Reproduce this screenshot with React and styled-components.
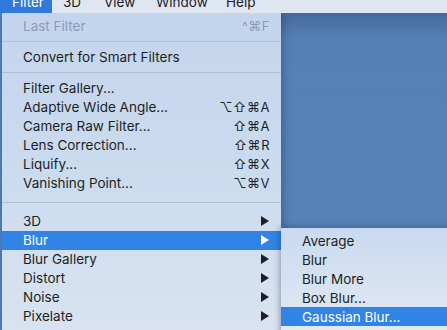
import React from "react";
import styled, { createGlobalStyle, css } from "styled-components";

const GlobalStyle = createGlobalStyle`
  html, body {
    margin: 0;
    padding: 0;
    background: #5580b6;
  }
  body {
    font-family: "Inter", "DejaVu Sans", sans-serif;
    -webkit-font-smoothing: antialiased;
  }
`;

const menuTitles = [
  { label: "Filter", width: 52, active: true },
  { label: "3D", width: 39 },
  { label: "View", width: 50 },
  { label: "Window", width: 68 },
  { label: "Help", width: 44 },
];

const mainItems = [
  { label: "Last Filter", shortcut: "^⌘F", disabled: true },
  { sep: true, top: 5, bottom: 6 },
  { label: "Convert for Smart Filters" },
  { sep: true, top: 5, bottom: 6 },
  { label: "Filter Gallery..." },
  { label: "Adaptive Wide Angle...", shortcut: "⌥⇧⌘A" },
  { label: "Camera Raw Filter...", shortcut: "⇧⌘A" },
  { label: "Lens Correction...", shortcut: "⇧⌘R" },
  { label: "Liquify...", shortcut: "⇧⌘X" },
  { label: "Vanishing Point...", shortcut: "⌥⌘V" },
  { sep: true, top: 9, bottom: 9 },
  { label: "3D", sub: true },
  { label: "Blur", sub: true, active: true },
  { label: "Blur Gallery", sub: true },
  { label: "Distort", sub: true },
  { label: "Noise", sub: true },
  { label: "Pixelate", sub: true },
  { label: "Render", sub: true },
];

const blurItems = [
  { label: "Average" },
  { label: "Blur" },
  { label: "Blur More" },
  { label: "Box Blur..." },
  { label: "Gaussian Blur...", active: true },
  { label: "Lens Blur..." },
];

class App extends React.Component {
  renderRow(item, i) {
    if (item.sep) {
      return (
        <Separator key={i} $top={item.top} $bottom={item.bottom}>
          <Line />
        </Separator>
      );
    }
    return (
      <Row key={i} $active={item.active} $disabled={item.disabled}>
        <Label>{item.label}</Label>
        {item.shortcut && <Shortcut>{item.shortcut}</Shortcut>}
        {item.sub && (
          <Arrow viewBox="0 0 8 10">
            <polygon points="0,0 8,5 0,10" fill="currentColor" />
          </Arrow>
        )}
      </Row>
    );
  }

  render() {
    return (
      <Screen>
        <GlobalStyle />
        <MenuBar>
          {menuTitles.map((t) => (
            <MenuTitle key={t.label} $w={t.width} $active={t.active}>
              {t.label}
            </MenuTitle>
          ))}
        </MenuBar>
        <Workspace>
          <Dropdown>{mainItems.map((item, i) => this.renderRow(item, i))}</Dropdown>
          <Desktop />
        </Workspace>
        <Submenu>{blurItems.map((item, i) => this.renderRow(item, i))}</Submenu>
      </Screen>
    );
  }
}

const Screen = styled.div`
  position: relative;
  width: 447px;
  height: 330px;
  overflow: hidden;
  background: #5580b6;
`;

const MenuBar = styled.div`
  display: flex;
  height: 13px;
  overflow: hidden;
  background: #dfe6f0;
  position: relative;
  z-index: 3;
`;

const MenuTitle = styled.div`
  flex: none;
  box-sizing: border-box;
  width: ${(p) => p.$w}px;
  margin-top: -6px;
  height: 19px;
  line-height: 17px;
  padding-left: ${(p) => (p.$active ? 12 : 9)}px;
  font-size: 13.5px;
  white-space: nowrap;
  color: #1c1c1e;
  ${(p) =>
    p.$active &&
    css`
      background: #2f79dc;
      color: #ffffff;
    `}
  & + & {
    margin-left: 2px;
  }
`;

const Workspace = styled.div`
  display: flex;
  height: 317px;
`;

const Dropdown = styled.div`
  width: 279px;
  margin-left: 2px;
  padding-top: 3.5px;
  background: linear-gradient(180deg, #c3d5ed 0%, #ccdcef 55%, #d9e3f0 100%);
  box-shadow: 2px 0 8px rgba(20, 40, 80, 0.35);
  position: relative;
  z-index: 2;
`;

const Desktop = styled.div`
  flex: 1;
  background: linear-gradient(180deg, #46699c 0%, #5580b6 8%, #5883b9 100%);
`;

const Submenu = styled.div`
  position: absolute;
  left: 281px;
  top: 228px;
  width: 180px;
  height: 120px;
  padding-top: 3px;
  background: linear-gradient(180deg, #c9daf0 0%, #d8e3f1 50%, #e6ecf4 100%);
  box-shadow: -1px -1px 6px rgba(20, 40, 80, 0.4);
  z-index: 4;
`;

const Row = styled.div`
  display: flex;
  align-items: center;
  height: 19px;
  padding: 0 11px 0 21px;
  font-size: 13.5px;
  color: #1d1f24;
  ${(p) =>
    p.$disabled &&
    css`
      color: #8c9cb3;
    `}
  ${(p) =>
    p.$active &&
    css`
      background: #3183e6;
      color: #ffffff;
    `}
`;

const Label = styled.span`
  flex: 1;
  white-space: nowrap;
`;

const Shortcut = styled.span`
  font-size: 13px;
  letter-spacing: 0.5px;
`;

const Arrow = styled.svg`
  width: 8px;
  height: 10px;
  margin-right: 1px;
`;

const Separator = styled.div`
  padding-top: ${(p) => p.$top}px;
  padding-bottom: ${(p) => p.$bottom}px;
`;

const Line = styled.div`
  height: 1px;
  background: #b2c1d6;
`;

export default App;
